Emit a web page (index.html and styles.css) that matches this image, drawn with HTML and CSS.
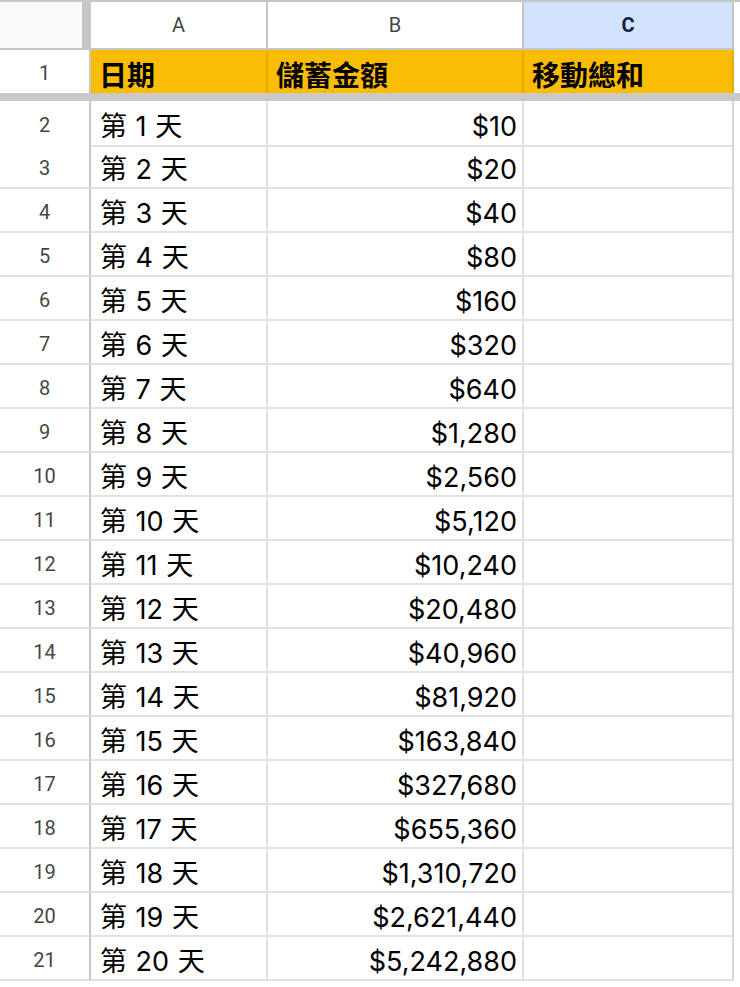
FILE: index.html
```html
<!DOCTYPE html>
<html lang="zh-Hant">
<head>
<meta charset="utf-8">
<title>Sheet</title>
<link rel="stylesheet" href="styles.css">
</head>
<body>
<div class="sheet">
  <div class="grid colhdr">
    <div class="corner"></div>
    <div class="ch">A</div>
    <div class="ch">B</div>
    <div class="ch sel">C</div>
  </div>
  <div class="grid row1">
    <div class="rh">1</div>
    <div class="yc">日期</div>
    <div class="yc">儲蓄金額</div>
    <div class="yc">移動總和</div>
  </div>
  <div class="freeze"></div>
  <div class="grid body">
    <div class="rh first">2</div><div class="tc first">第 1 天</div><div class="nc first">$10</div><div class="ec first"></div>
    <div class="rh">3</div><div class="tc">第 2 天</div><div class="nc">$20</div><div class="ec"></div>
    <div class="rh">4</div><div class="tc">第 3 天</div><div class="nc">$40</div><div class="ec"></div>
    <div class="rh">5</div><div class="tc">第 4 天</div><div class="nc">$80</div><div class="ec"></div>
    <div class="rh">6</div><div class="tc">第 5 天</div><div class="nc">$160</div><div class="ec"></div>
    <div class="rh">7</div><div class="tc">第 6 天</div><div class="nc">$320</div><div class="ec"></div>
    <div class="rh">8</div><div class="tc">第 7 天</div><div class="nc">$640</div><div class="ec"></div>
    <div class="rh">9</div><div class="tc">第 8 天</div><div class="nc">$1,280</div><div class="ec"></div>
    <div class="rh">10</div><div class="tc">第 9 天</div><div class="nc">$2,560</div><div class="ec"></div>
    <div class="rh">11</div><div class="tc">第 10 天</div><div class="nc">$5,120</div><div class="ec"></div>
    <div class="rh">12</div><div class="tc">第 11 天</div><div class="nc">$10,240</div><div class="ec"></div>
    <div class="rh">13</div><div class="tc">第 12 天</div><div class="nc">$20,480</div><div class="ec"></div>
    <div class="rh">14</div><div class="tc">第 13 天</div><div class="nc">$40,960</div><div class="ec"></div>
    <div class="rh">15</div><div class="tc">第 14 天</div><div class="nc">$81,920</div><div class="ec"></div>
    <div class="rh">16</div><div class="tc">第 15 天</div><div class="nc">$163,840</div><div class="ec"></div>
    <div class="rh">17</div><div class="tc">第 16 天</div><div class="nc">$327,680</div><div class="ec"></div>
    <div class="rh">18</div><div class="tc">第 17 天</div><div class="nc">$655,360</div><div class="ec"></div>
    <div class="rh">19</div><div class="tc">第 18 天</div><div class="nc">$1,310,720</div><div class="ec"></div>
    <div class="rh">20</div><div class="tc">第 19 天</div><div class="nc">$2,621,440</div><div class="ec"></div>
    <div class="rh">21</div><div class="tc">第 20 天</div><div class="nc">$5,242,880</div><div class="ec"></div>
  </div>
</div>
</body>
</html>
```
FILE: styles.css
```css
* { box-sizing: border-box; }
html, body { margin: 0; padding: 0; background: #ffffff; }
body {
  width: 740px;
  height: 987px;
  overflow: hidden;
  font-family: "Inter", "Noto Sans CJK TC", sans-serif;
  color: #000;
}
.sheet { width: 740px; }
.grid {
  display: grid;
  grid-template-columns: 91px 177px 256px 210px;
}
.colhdr {
  border-top: 2px solid #c4c7c5;
  height: 50px;
}
.corner {
  background: #f8f9fa;
  border-right: 9px solid #c4c7c5;
  border-bottom: 2px solid #c4c7c5;
}
.ch {
  display: flex;
  align-items: center;
  justify-content: center;
  background: #fff;
  border-right: 2px solid #c4c7c5;
  border-bottom: 2px solid #c4c7c5;
  font-family: "Roboto", "Liberation Sans", sans-serif;
  font-size: 20px;
  color: #444746;
}
.ch.sel {
  background: #d3e3fd;
  color: #0b1d45;
  font-weight: 700;
}
.row1 { height: 43px; }
.rh {
  display: flex;
  align-items: center;
  justify-content: center;
  padding-top: 3px;
  border-right: 2px solid #c4c7c5;
  border-bottom: 2px solid #e1e1e1;
  font-family: "Roboto", "Liberation Sans", sans-serif;
  font-size: 20px;
  color: #444746;
  background: #fff;
}
.row1 .rh { border-bottom: none; }
.yc {
  display: flex;
  align-items: center;
  padding: 5px 0 0 8px;
  background: #fbbc04;
  border-right: 2px solid #e5ab0c;
  font-family: "Noto Sans CJK TC", sans-serif;
  font-weight: 700;
  font-size: 28px;
  line-height: 1;
}
.freeze {
  height: 8px;
  background: #c9c9c9;
}
.body { grid-auto-rows: 44px; }
.body .first { height: 46px; }
.tc, .nc, .ec {
  border-right: 2px solid #e1e1e1;
  border-bottom: 2px solid #e1e1e1;
  display: flex;
  align-items: center;
  font-size: 27px;
  line-height: 1;
  padding-top: 6px;
}
.tc { padding-left: 9px; word-spacing: 1px; }
.nc { justify-content: flex-end; padding-right: 5px; }
.ec { border-right-color: #d6d6d6; }
```
